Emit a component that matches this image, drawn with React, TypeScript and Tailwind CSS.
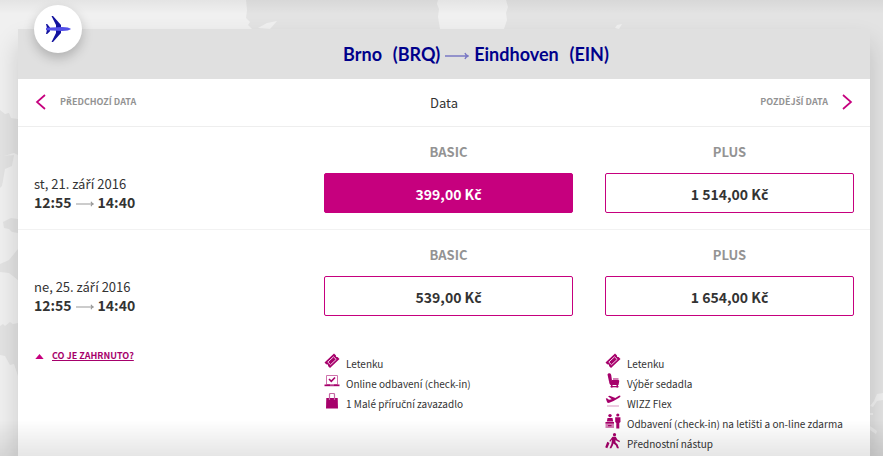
import { ReactNode } from "react";

interface Fare {
  name: string;
  price: string;
  selected?: boolean;
}

interface Flight {
  date: string;
  departure: string;
  arrival: string;
  fares: Fare[];
}

const flights: Flight[] = [
  {
    date: "st, 21. září 2016",
    departure: "12:55",
    arrival: "14:40",
    fares: [
      { name: "BASIC", price: "399,00 Kč", selected: true },
      { name: "PLUS", price: "1 514,00 Kč" },
    ],
  },
  {
    date: "ne, 25. září 2016",
    departure: "12:55",
    arrival: "14:40",
    fares: [
      { name: "BASIC", price: "539,00 Kč" },
      { name: "PLUS", price: "1 654,00 Kč" },
    ],
  },
];

export default function App() {
  return (
    <main className="relative min-h-screen overflow-hidden bg-[#f0f0f0] pt-[29px] pr-[13px] pl-[18px] font-['Noto_Sans_CJK_SC','Noto_Sans',sans-serif] text-[#333333]">
      <MapBackground />
      <section className="relative min-h-[calc(100vh-29px)] bg-white shadow-[0_14px_24px_rgba(0,0,0,0.16)]">
        <RouteHeader />
        <DateNavigation />
        {flights.map((flight) => (
          <FlightRow key={flight.date} flight={flight} />
        ))}
        <Included />
      </section>
      <div className="pointer-events-none fixed inset-x-0 bottom-0 h-9 bg-gradient-to-b from-transparent to-black/10" />
    </main>
  );
}

// The CJK family has no glyphs for some Czech letters, those use Noto Sans
const Czech = ({ text }: { text: string }) => (
  <span>
    {text.split(/([řčšžŘČŠŽ])/).map((part, index) =>
      index % 2 ? (
        <span key={index} className="font-['Noto_Sans',sans-serif]">
          {part}
        </span>
      ) : (
        part
      ),
    )}
  </span>
);

const RouteHeader = () => (
  <header className="relative flex h-[50px] items-center justify-center bg-[#e0e0e0] pl-16">
    <div className="absolute -top-6 left-4 flex size-12 items-center justify-center rounded-full bg-white shadow-[0_5px_12px_rgba(0,0,0,0.22)]">
      <PlaneIcon />
    </div>
    <h1 className="flex items-center gap-[5px] font-['Lato',sans-serif] text-lg font-bold whitespace-pre text-[#00008b]">
      <span>
        Brno{"  "}
        <span className="ml-0.5">(BRQ)</span>
      </span>
      <Arrow className="mt-1 w-6 text-[#7a78c4]" />
      <span>
        Eindhoven{"  "}
        <span className="ml-0.5">(EIN)</span>
      </span>
    </h1>
  </header>
);

const DateNavigation = () => (
  <nav className="grid h-12 grid-cols-[1fr_auto_1fr] items-center border-b border-[#eeeeee] px-4">
    <button className="flex items-center gap-3 justify-self-start pb-0.5 text-[9px] leading-4 font-bold text-[#939393]">
      <Chevron points="11,1 3,8 11,15" />
      <Czech text="PŘEDCHOZÍ DATA" />
    </button>
    <h2 className="text-[13px] leading-5">Data</h2>
    <button className="flex items-center gap-3 justify-self-end pb-0.5 text-[9px] leading-4 font-bold text-[#939393]">
      <Czech text="POZDĚJŠÍ DATA" />
      <Chevron points="3,1 11,8 3,15" />
    </button>
  </nav>
);

const FlightRow = ({ flight }: { flight: Flight }) => (
  <article className="grid grid-cols-[258fr_249fr_249fr] items-end gap-8 border-b border-[#f2f2f2] px-4 pt-[15px] pb-4 nth-[4]:border-b-0">
    <div className="pb-0.5 text-[13px] leading-[18px]">
      <p>
        <Czech text={flight.date} />
      </p>
      <p className="flex items-center gap-1 text-sm leading-[18px] font-bold">
        {flight.departure}
        <Arrow className="mt-1 w-[18px] text-[#999999]" />
        {flight.arrival}
      </p>
    </div>
    {flight.fares.map((fare) => (
      <FareOption key={fare.name} fare={fare} />
    ))}
  </article>
);

const FareOption = ({ fare }: { fare: Fare }) => (
  <div className="flex flex-col gap-[11px] text-center">
    <h3 className="text-[13px] leading-5 font-bold text-[#939393]">
      {fare.name}
    </h3>
    <button
      className={`h-10 rounded-xs border border-[#c6007e] pt-0.5 text-sm font-bold ${
        fare.selected ? "bg-[#c6007e] text-white" : "bg-white"
      }`}
    >
      <Czech text={fare.price} />
    </button>
  </div>
);

const Included = () => (
  <div className="grid grid-cols-[258fr_249fr_249fr] gap-8 px-4 pt-4">
    <a
      href="#included"
      className="flex items-center gap-2 self-start justify-self-start text-[9px] leading-4 font-bold text-[#a6006b]"
    >
      <svg viewBox="0 0 10 6" className="ml-px h-[5px] w-[9px]" aria-hidden>
        <path d="M5 0 10 6H0Z" fill="#c6007e" />
      </svg>
      <span className="underline">CO JE ZAHRNUTO?</span>
    </a>
    <ul id="included" className="pt-[5px]">
      <Service icon={<TicketIcon />} label="Letenku" />
      <Service icon={<LaptopIcon />} label="Online odbavení (check-in)" />
      <Service icon={<BagIcon />} label="1 Malé příruční zavazadlo" />
    </ul>
    <ul className="pt-[5px]">
      <Service icon={<TicketIcon />} label="Letenku" />
      <Service icon={<SeatIcon />} label="Výběr sedadla" />
      <Service icon={<TakeoffIcon />} label="WIZZ Flex" />
      <Service
        icon={<DeskIcon />}
        label="Odbavení (check-in) na letišti a on-line zdarma"
      />
      <Service icon={<WalkerIcon />} label="Přednostní nástup" />
    </ul>
  </div>
);

const Service = ({ icon, label }: { icon: ReactNode; label: string }) => (
  <li className="flex h-5 items-start gap-[6px] text-[10px] leading-4 whitespace-nowrap">
    {icon}
    <span className="pt-[3px]">
      <Czech text={label} />
    </span>
  </li>
);

const Icon = ({ children }: { children: ReactNode }) => (
  <svg
    viewBox="0 0 16 16"
    className="size-4 shrink-0"
    fill="#a6006b"
    aria-hidden
  >
    {children}
  </svg>
);

const TicketIcon = () => (
  <Icon>
    <path d="M10 .5 12 2.500c-.4 1 .5 1.900 1.500 1.500L15.500 6 6 15l-2-2c.4-1.100-.5-2-1.600-1.600L.5 9.500Z" />
    <path
      d="m9.500 3.800 2.700 2.600-5.700 5.300-2.700-2.600Z"
      fill="none"
      stroke="#f3cfe5"
      strokeWidth="1"
    />
  </Icon>
);

const LaptopIcon = () => (
  <Icon>
    <path
      d="M2.500 2.500h11v9h-11Z"
      fill="#fff"
      stroke="#cf73ad"
      strokeWidth="1"
    />
    <path
      d="m5 6 2.300 2.300L11 4.500"
      fill="none"
      stroke="#a6006b"
      strokeWidth="1.600"
    />
    <path d="M.5 11.500h15v1.700h-15Z" />
    <path d="M6 11.500h4v.8H6Z" fill="#e5b5d3" />
  </Icon>
);

const BagIcon = () => (
  <Icon>
    <path d="M2.300 5h11.400l.3 10.500H2Z" />
    <path
      d="M5.500 7V1.500q0-1 1-1h3q1 0 1 1V7"
      fill="none"
      stroke="#c568a3"
      strokeWidth="1.200"
    />
  </Icon>
);

const SeatIcon = () => (
  <Icon>
    <path d="M2.500 1.500Q3 0 4.500.2 6 .3 6.200 2L7 7.500l-3 1Z" />
    <path d="M4 8.200 7 7h6.500q1 .3.700 1.500L13.500 12H5.800Q4.500 12 4 8.200Z" />
    <path d="M8 5.500h5.500v1H8Z" />
    <path d="M6 12h1.500v2.500H6ZM11.500 12H13v2.500h-1.500Z" />
    <path d="M5.500 13h8v1.300h-8Z" />
  </Icon>
);

const TakeoffIcon = () => (
  <Icon>
    <path d="M.8 5.500 2 5.200l2 1.600 2.700-.6L3 3.200l1.700-.5 5.600 2.400L13.500 3q1.600-.9 2 0 .2.800-1.300 1.700L8.500 8l-4.800 2-1.500-.5Z" />
    <path d="M2 12.500h12v1H2Z" fill="#d996c0" />
  </Icon>
);

const DeskIcon = () => (
  <Icon>
    <circle cx="5" cy="2.600" r="1.700" />
    <path d="M2.500 5h5l.7 3.500H1.800Z" />
    <path d="M.5 9.500h8.500V15H.5Z" fill="#d47fb4" />
    <path d="M.5 9h8.500v1.500H.5ZM3 12h3.500v1.200H3Z" />
    <circle cx="12.800" cy="2" r="1.600" />
    <path d="M10.200 4.200h5.200l.1 4.800-1.200 1v5.500h-3V10l-1.100-1Z" />
  </Icon>
);

const WalkerIcon = () => (
  <Icon>
    <circle cx="9.500" cy="1.700" r="1.600" />
    <path d="M7.500 3.700h3.300l1.500 2.800L15 8l-.5 1.200-3-1.400-.8-1-.3 2.400 2.200 2.300L14 15.300h-2l-1.300-3-2.200-1.700-.8 2.200-1.400 2.500H4.500L6.400 11 7 6.500 5.300 8.800l-1-.7Z" />
    <path d="m2.300 8.800 2.200 1.100-2.200 5.400-2.100-1Z" />
  </Icon>
);

const PlaneIcon = () => (
  <svg viewBox="0 0 28 28" className="size-7" aria-hidden>
    <path
      d="M7.500 1H9l8 9v8l-8 9H7.500l4.500-9V10ZM2 9h1.200L6 12.500v3.700L3.200 19H2l1-4v-2Z"
      fill="#12129e"
    />
    <path
      d="M2 12.800 18 12q7 .2 9 2-2 1.800-9 2L2 15.200Z"
      fill="#5350e8"
    />
  </svg>
);

const Arrow = ({ className }: { className: string }) => (
  <svg
    viewBox="0 0 24 8"
    className={`h-2 shrink-0 ${className}`}
    preserveAspectRatio="xMaxYMid meet"
    fill="none"
    stroke="currentColor"
    aria-hidden
  >
    <path d="M0 4h23M20 1q.5 2 3 3-2.500 1-3 3" strokeWidth="1.400" />
  </svg>
);

const Chevron = ({ points }: { points: string }) => (
  <svg
    viewBox="0 0 14 16"
    className="h-4 w-[14px]"
    fill="none"
    stroke="#c6007e"
    strokeWidth="1.700"
    aria-hidden
  >
    <polyline points={points} />
  </svg>
);

// Faded map with the shadow of the panel above it
const MapBackground = () => (
  <svg
    viewBox="0 0 883 456"
    preserveAspectRatio="none"
    className="absolute inset-0 size-full"
    aria-hidden
  >
    <defs>
      <linearGradient id="top" x1="0" y1="0" x2="0" y2="1">
        <stop offset="0" stopOpacity=".05" />
        <stop offset="1" stopOpacity="0" />
      </linearGradient>
    </defs>
    <g fill="#e3e3e3">
      <path d="M246 0h192l-1 4 2 5-1 8 2 12H252l-4-4 2-3-4-4 1-8Z" />
      <path d="M506 0h377v456H860V29H504l3-9-1-7 2-6Z" />
      <path d="M0 110l5 4 4-1 2 5 7 1v36l-4-2-10 3-4 2Z" />
      <path d="M0 156l14-1-2 11-7 3-3 17-2 2ZM3 222l8-4 7 1v14l-6-1-3-3-5-1ZM0 264l9-4 9-11v31l-9-7-9-1Z" />
      <path d="M0 326l3-2 2 2 5-4 3 2 5-1v53l-4-12-4 1-5-9-5-1Z" />
    </g>
    <g fill="#f0f0f0">
      <path d="m615 28 2-3 5-1-3 5ZM267 23l10-2-7 8-12-1Z" />
      <path d="m870 406 4-5 3-7 6-1v7l-6 1-4 6ZM870 413h3v2h-3ZM870 426l7 5-1 3-6-4Z" />
    </g>
    <rect x="0" y="0" width="883" height="14" fill="url(#top)" />
  </svg>
);
